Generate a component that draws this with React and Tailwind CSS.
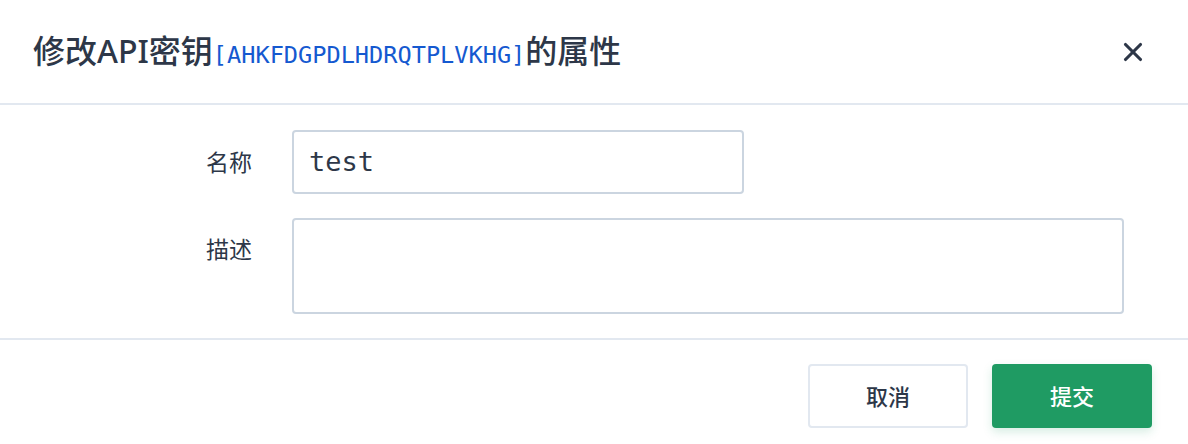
import { X } from 'lucide-react';

const cjk = "font-['Noto_Sans','Noto_Sans_CJK_SC',sans-serif]";
const mono = "font-['DejaVu_Sans_Mono','Noto_Sans_CJK_SC',monospace]";

export default function App() {
  return (
    <div className={`flex h-[444px] w-[1188px] flex-col bg-white text-[#2d3748] ${cjk}`}>
      <header className="flex h-[105px] shrink-0 items-center justify-between border-b-2 border-[#e2e8f0] pl-[33px] pr-[40px]">
        <h2 className="flex items-baseline text-[32px] leading-none font-medium">
          <span>修改API密钥</span>
          <span className={`${mono} text-[23.6px] font-normal text-[#1559d0]`}>[AHKFDGPDLHDRQTPLVKHG]</span>
          <span>的属性</span>
        </h2>
        <button type="button" className="text-[#2d3748]" aria-label="关闭">
          <X size={30} strokeWidth={2.5} />
        </button>
      </header>

      <div className="flex shrink-0 flex-col gap-[24px] border-b-2 border-[#e2e8f0] pt-[25px] pb-[24px]">
        <div className="flex items-center">
          <label className="w-[252px] text-right text-[23px] text-[#2d3748]">名称</label>
          <div className="ml-[40px] flex h-[64px] w-[452px] items-center rounded border-2 border-[#cbd5e0] px-[15px]">
            <span className={`${mono} text-[27px]`}>test</span>
          </div>
        </div>
        <div className="flex items-start">
          <label className="mt-[14px] w-[252px] text-right text-[23px] text-[#2d3748]">描述</label>
          <div className="ml-[40px] h-[96px] w-[832px] rounded border-2 border-[#cbd5e0]" />
        </div>
      </div>

      <footer className="flex flex-1 items-start justify-end gap-[24px] pt-[24px] pr-[36px]">
        <button type="button" className="h-[64px] w-[160px] rounded border-2 border-[#e2e8f0] bg-white text-[22px] font-medium text-[#2d3748]">
          取消
        </button>
        <button type="button" className="h-[64px] w-[160px] rounded bg-[#1f9b63] text-[22px] font-medium text-white shadow-[0_4px_10px_rgba(31,155,99,0.18)]">
          提交
        </button>
      </footer>
    </div>
  );
}
